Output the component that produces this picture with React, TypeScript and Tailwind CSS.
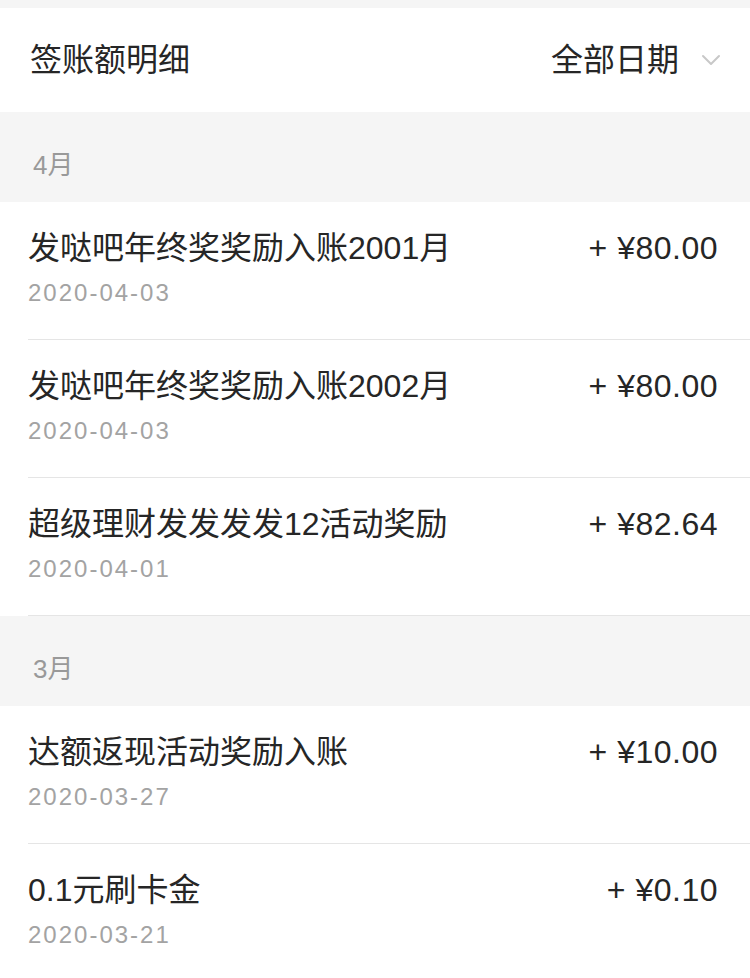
const FONT = "font-['Helvetica_Neue','Liberation_Sans','Noto_Sans_CJK_SC',sans-serif]";

interface Record {
  title: string;
  amount: string;
  date: string;
}

const groups: { month: string; items: Record[] }[] = [
  {
    month: '4月',
    items: [
      { title: '发哒吧年终奖奖励入账2001月', amount: '+ ¥80.00', date: '2020-04-03' },
      { title: '发哒吧年终奖奖励入账2002月', amount: '+ ¥80.00', date: '2020-04-03' },
      { title: '超级理财发发发发12活动奖励', amount: '+ ¥82.64', date: '2020-04-01' },
    ],
  },
  {
    month: '3月',
    items: [
      { title: '达额返现活动奖励入账', amount: '+ ¥10.00', date: '2020-03-27' },
      { title: '0.1元刷卡金', amount: '+ ¥0.10', date: '2020-03-21' },
    ],
  },
];

function Row({ item }: { item: Record }) {
  return (
    <div className="pl-[28px] bg-white">
      <div className="h-[138px] border-b border-[#e5e5e5] pr-[32px] pt-[24px]">
        <div className="flex items-center justify-between h-[44px]">
          <span className="text-[32px] text-[#262626] leading-none">{item.title}</span>
          <span className="text-[32px] text-[#262626] leading-none tracking-[0.5px]">{item.amount}</span>
        </div>
        <div className="mt-[5px] text-[24px] leading-[36px] tracking-[2px] text-[#a3a3a3]">{item.date}</div>
      </div>
    </div>
  );
}

export default function App() {
  return (
    <div className={`w-[750px] min-h-[978px] bg-white ${FONT}`}>
      <div className="h-[8px] bg-[#f5f5f5]" />
      <div className="h-[104px] flex items-center justify-between pl-[30px] pr-[29px]">
        <span className="text-[32px] text-[#262626]">签账额明细</span>
        <div className="flex items-center">
          <span className="text-[32px] text-[#262626]">全部日期</span>
          <svg className="ml-[22px]" width="20" height="12" viewBox="0 0 20 12" fill="none">
            <path d="M2 2l8 8 8-8" stroke="#c8c8c8" strokeWidth="2" strokeLinecap="round" strokeLinejoin="round" />
          </svg>
        </div>
      </div>
      {groups.map((g) => (
        <div key={g.month}>
          <div className="h-[90px] bg-[#f5f5f5] flex items-center pl-[33px] pt-[16px]">
            <span className="text-[26px] text-[#999]">{g.month}</span>
          </div>
          {g.items.map((item, i) => (
            <Row key={i} item={item} />
          ))}
        </div>
      ))}
    </div>
  );
}
